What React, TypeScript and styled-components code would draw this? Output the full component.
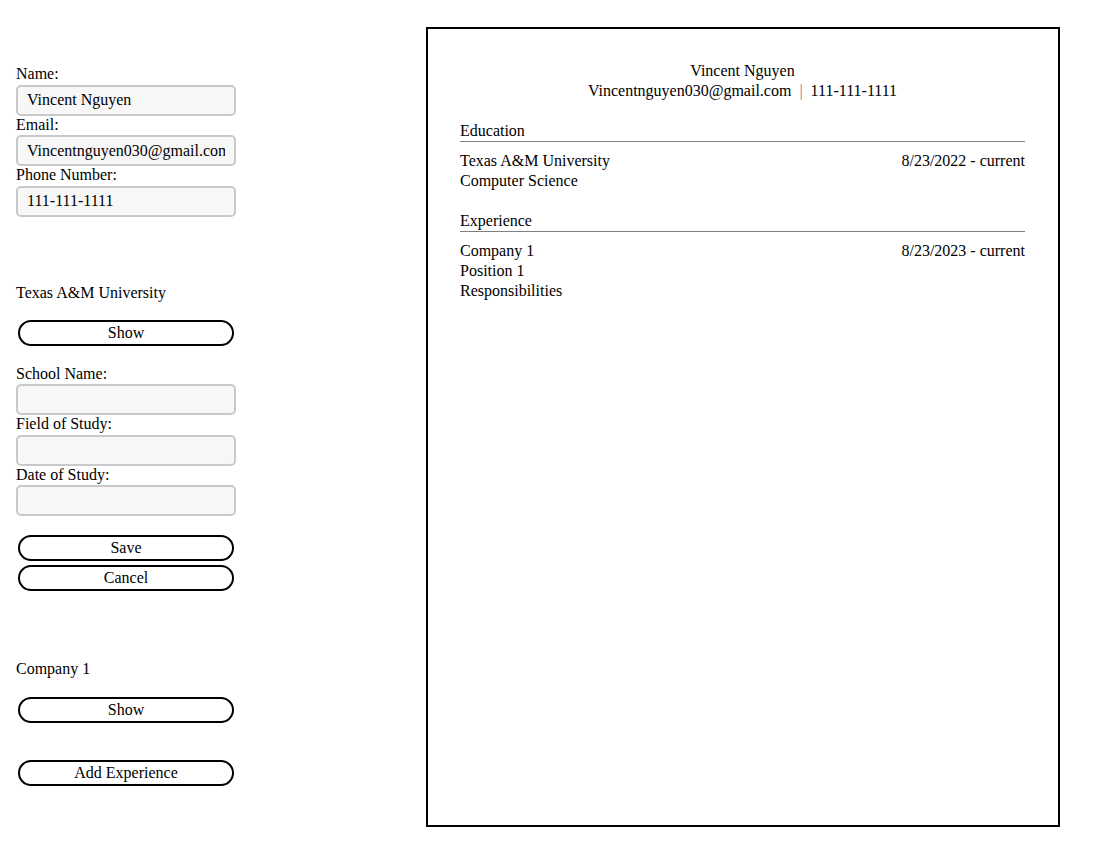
import React from "react";
import styled, { createGlobalStyle } from "styled-components";

const GlobalStyle = createGlobalStyle`
  html, body {
    margin: 0;
    padding: 0;
    background: #ffffff;
    color: #000000;
    font-family: "Liberation Serif", "Times New Roman", serif;
    font-size: 16px;
  }
  * { box-sizing: border-box; }
`;

const Page = styled.div`
  display: flex;
  align-items: flex-start;
  padding-left: 16px;
  width: 1095px;
`;

const Sidebar = styled.aside`
  width: 410px;
  flex: none;
  display: flex;
  flex-direction: column;
  padding-top: 65.3px;
`;

const Group = styled.section<{ $gap?: number }>`
  display: flex;
  flex-direction: column;
  margin-top: ${(p) => p.$gap ?? 0}px;
`;

const Field = styled.div`
  display: flex;
  flex-direction: column;
`;

const Label = styled.label`
  display: block;
  line-height: 18.5px;
`;

const Input = styled.input`
  display: block;
  width: 220px;
  height: 31px;
  margin: 1px 0 0;
  padding: 0 9px;
  border: 2px solid #c9c9c9;
  border-radius: 5px;
  background: #f7f7f7;
  font-family: "Liberation Serif", "Times New Roman", serif;
  font-size: 16px;
  color: #000;
  outline: none;
`;

const ItemTitle = styled.div`
  line-height: 18.5px;
`;

const PillButton = styled.button<{ $gap?: number }>`
  display: block;
  width: 216px;
  height: 26px;
  margin: ${(p) => p.$gap ?? 0}px 2px 0;
  padding: 0;
  border: 2px solid #000;
  border-radius: 999px;
  background: #fff;
  font-family: "Liberation Serif", "Times New Roman", serif;
  font-size: 16px;
  line-height: 1;
  color: #000;
  cursor: pointer;
`;

const Resume = styled.main`
  width: 634px;
  height: 800px;
  flex: none;
  margin-top: 27px;
  border: 2px solid #000;
  padding: 32px 33px 0 32px;
  line-height: 20px;
`;

const Header = styled.header`
  display: flex;
  flex-direction: column;
  align-items: center;
  text-align: center;
`;

const Sep = styled.span`
  color: #87738f;
  margin: 0 8px;
`;

const Section = styled.section`
  margin-top: 20px;
`;

const SectionTitle = styled.h2`
  margin: 0;
  font-size: 16px;
  font-weight: normal;
  line-height: 20px;
  border-bottom: 1px solid #808080;
`;

const Entry = styled.div`
  margin-top: 9px;
  display: flex;
  flex-direction: column;
`;

const Row = styled.div`
  display: flex;
  justify-content: space-between;
`;

export default function App() {
  return (
    <>
      <GlobalStyle />
      <Page>
        <Sidebar>
          <Group>
            <Field>
              <Label>Name:</Label>
              <Input defaultValue="Vincent Nguyen" />
            </Field>
            <Field>
              <Label>Email:</Label>
              <Input defaultValue="Vincentnguyen030@gmail.com" />
            </Field>
            <Field>
              <Label>Phone Number:</Label>
              <Input defaultValue="111-111-1111" />
            </Field>
          </Group>

          <Group $gap={66.8}>
            <ItemTitle>Texas A&amp;M University</ItemTitle>
            <PillButton $gap={17.9}>Show</PillButton>
            <Group $gap={18.6}>
              <Field>
                <Label>School Name:</Label>
                <Input />
              </Field>
              <Field>
                <Label>Field of Study:</Label>
                <Input />
              </Field>
              <Field>
                <Label>Date of Study:</Label>
                <Input />
              </Field>
            </Group>
            <PillButton $gap={19.3}>Save</PillButton>
            <PillButton $gap={4}>Cancel</PillButton>
          </Group>

          <Group $gap={69}>
            <ItemTitle>Company 1</ItemTitle>
            <PillButton $gap={18}>Show</PillButton>
            <PillButton $gap={37.2}>Add Experience</PillButton>
          </Group>
        </Sidebar>

        <Resume>
          <Header>
            <div>Vincent Nguyen</div>
            <div>
              Vincentnguyen030@gmail.com<Sep>|</Sep>111-111-1111
            </div>
          </Header>

          <Section>
            <SectionTitle>Education</SectionTitle>
            <Entry>
              <Row>
                <span>Texas A&amp;M University</span>
                <span>8/23/2022 - current</span>
              </Row>
              <span>Computer Science</span>
            </Entry>
          </Section>

          <Section>
            <SectionTitle>Experience</SectionTitle>
            <Entry>
              <Row>
                <span>Company 1</span>
                <span>8/23/2023 - current</span>
              </Row>
              <span>Position 1</span>
              <span>Responsibilities</span>
            </Entry>
          </Section>
        </Resume>
      </Page>
    </>
  );
}
